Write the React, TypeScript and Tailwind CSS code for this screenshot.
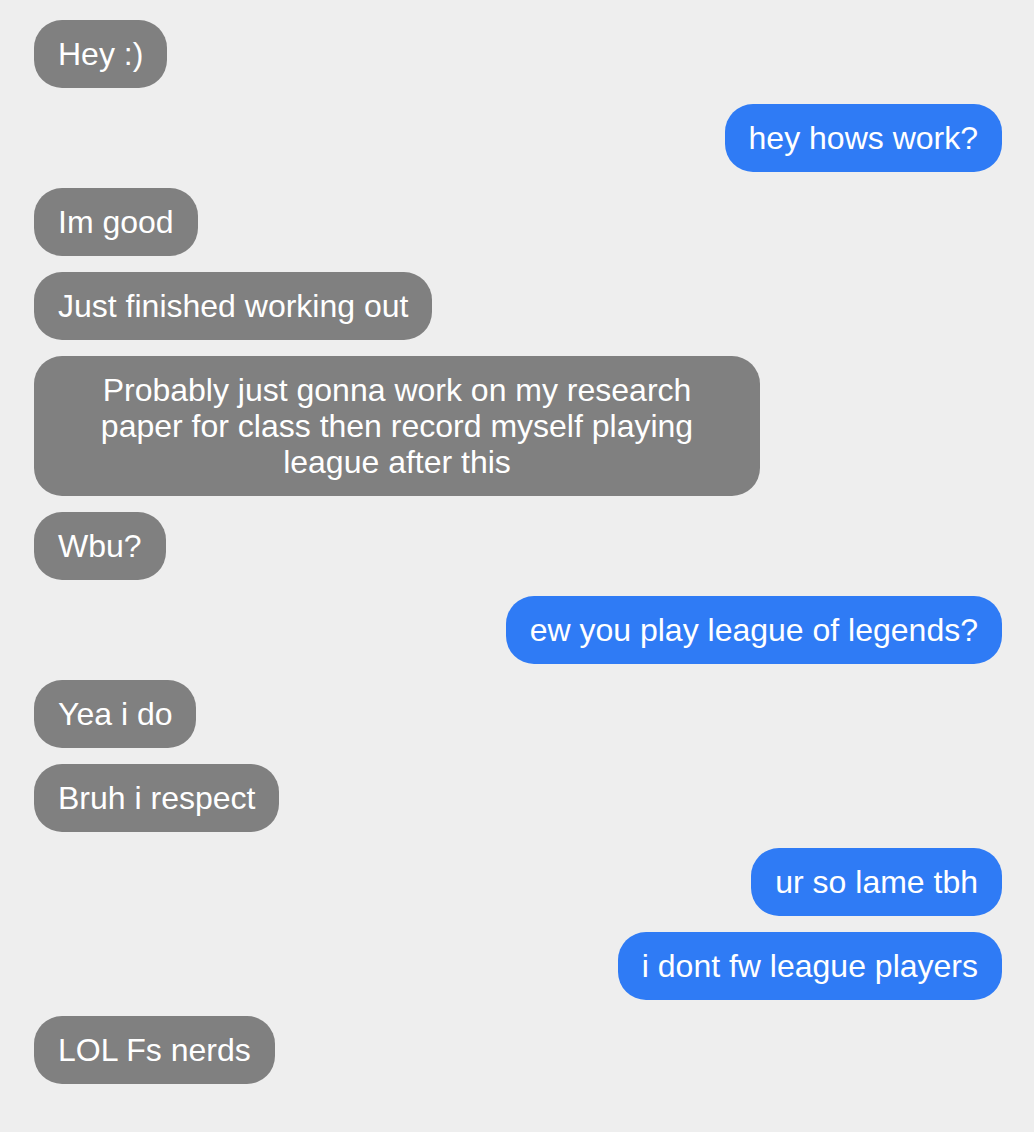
import React from 'react';

type Message = {
  from: 'them' | 'me';
  lines: string[];
};

const messages: Message[] = [
  { from: 'them', lines: ['Hey :)'] },
  { from: 'me', lines: ['hey hows work?'] },
  { from: 'them', lines: ['Im good'] },
  { from: 'them', lines: ['Just finished working out'] },
  {
    from: 'them',
    lines: [
      'Probably just gonna work on my research',
      'paper for class then record myself playing',
      'league after this',
    ],
  },
  { from: 'them', lines: ['Wbu?'] },
  { from: 'me', lines: ['ew you play league of legends?'] },
  { from: 'them', lines: ['Yea i do'] },
  { from: 'them', lines: ['Bruh i respect'] },
  { from: 'me', lines: ['ur so lame tbh'] },
  { from: 'me', lines: ['i dont fw league players'] },
  { from: 'them', lines: ['LOL Fs nerds'] },
];

function Bubble({ message }: { message: Message }) {
  const mine = message.from === 'me';
  const multi = message.lines.length > 1;

  return (
    <div className={mine ? 'flex justify-end' : 'flex justify-start'}>
      <div
        className={
          (mine ? 'bg-[#2f7bf5] ' : 'bg-[#808080] ') +
          (multi ? 'w-3/4 text-center ' : 'max-w-[75%] ') +
          'rounded-[28px] px-6 py-4 text-white text-[32px] leading-[36px] whitespace-nowrap'
        }
      >
        {message.lines.map((line, i) => (
          <div key={i}>{line}</div>
        ))}
      </div>
    </div>
  );
}

export default function App() {
  return (
    <div
      className="min-h-screen bg-[#eeeeee] pt-5 pl-[34px] pr-8 pb-12"
      style={{ fontFamily: '"Liberation Sans", Arial, sans-serif' }}
    >
      <div className="flex flex-col gap-4">
        {messages.map((m, i) => (
          <Bubble key={i} message={m} />
        ))}
      </div>
    </div>
  );
}
